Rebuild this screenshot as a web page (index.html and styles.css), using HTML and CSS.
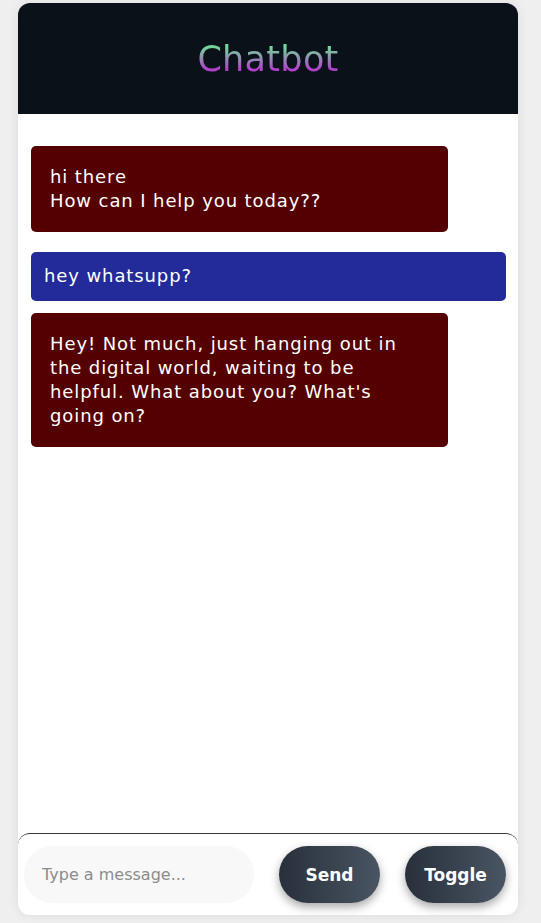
FILE: index.html
```html
<!DOCTYPE html>
<html lang="en">
<head>
<meta charset="utf-8">
<title>Chatbot</title>
<link rel="stylesheet" href="styles.css">
</head>
<body>
<div class="chat">
  <header class="chat-header">
    <h1 class="title">Chatbot</h1>
  </header>
  <main class="messages">
    <div class="msg bot">hi there<br>How can I help you today??</div>
    <div class="msg user">hey whatsupp?</div>
    <div class="msg bot">Hey! Not much, just hanging out in the digital world, waiting to be helpful. What about you? What's going on?</div>
  </main>
  <footer class="composer">
    <input class="input" type="text" placeholder="Type a message...">
    <button class="btn">Send</button>
    <button class="btn">Toggle</button>
  </footer>
</div>
</body>
</html>
```
FILE: styles.css
```css
html, body {
  margin: 0;
  padding: 0;
}
body {
  background: #efefef;
  font-family: "DejaVu Sans", sans-serif;
  height: 923px;
  overflow: hidden;
}
.chat {
  width: 500px;
  height: 912px;
  margin: 3px 0 0 18px;
  background: #fff;
  border-radius: 12px;
  box-shadow: 0 0 12px rgba(0,0,0,0.08);
  display: flex;
  flex-direction: column;
}
.chat-header {
  height: 111px;
  flex: none;
  background: #0b1119;
  border-radius: 12px 12px 0 0;
  display: flex;
  align-items: center;
  justify-content: center;
}
.title {
  margin: 0;
  font-size: 35px;
  font-weight: 400;
  line-height: 1;
  padding-top: 2px;
  letter-spacing: 0.3px;
  background: linear-gradient(to bottom, #74d69a 20%, #b23fcb 80%);
  -webkit-background-clip: text;
  background-clip: text;
  color: transparent;
}
.messages {
  flex: 1;
  padding: 32px 12px 0 13px;
  display: flex;
  flex-direction: column;
  align-items: flex-start;
}
.msg {
  color: #fff;
  font-size: 18px;
  letter-spacing: 0.9px;
  line-height: 24px;
  border-radius: 5px;
}
.bot {
  background: #550000;
  width: 417px;
  box-sizing: border-box;
  padding: 19px 19px;
  margin-bottom: 20px;
}
.bot + .bot { margin-bottom: 0; }
.user {
  background: #222b99;
  align-self: stretch;
  padding: 12px 13px 13px;
  margin-bottom: 12px;
}
.composer {
  flex: none;
  border-top: 1px solid #3a3a3a;
  border-radius: 12px;
  padding: 12px 12px 12px 6px;
  display: flex;
  align-items: center;
  gap: 25px;
}
.input {
  width: 230px;
  height: 57px;
  box-sizing: border-box;
  border: none;
  outline: none;
  border-radius: 28px;
  background: #f8f8f8;
  padding: 0 18px;
  font-family: "DejaVu Sans", sans-serif;
  font-size: 16px;
  color: #333;
}
.input::placeholder { color: #8c8c8c; }
.btn {
  width: 101px;
  height: 57px;
  border: none;
  border-radius: 29px;
  background: linear-gradient(to right, #27303b, #4a5563);
  color: #fff;
  font-family: "DejaVu Sans", sans-serif;
  font-weight: 700;
  font-size: 17px;
  box-shadow: 0 4px 10px rgba(0,0,0,0.35);
  padding: 0;
}
```
